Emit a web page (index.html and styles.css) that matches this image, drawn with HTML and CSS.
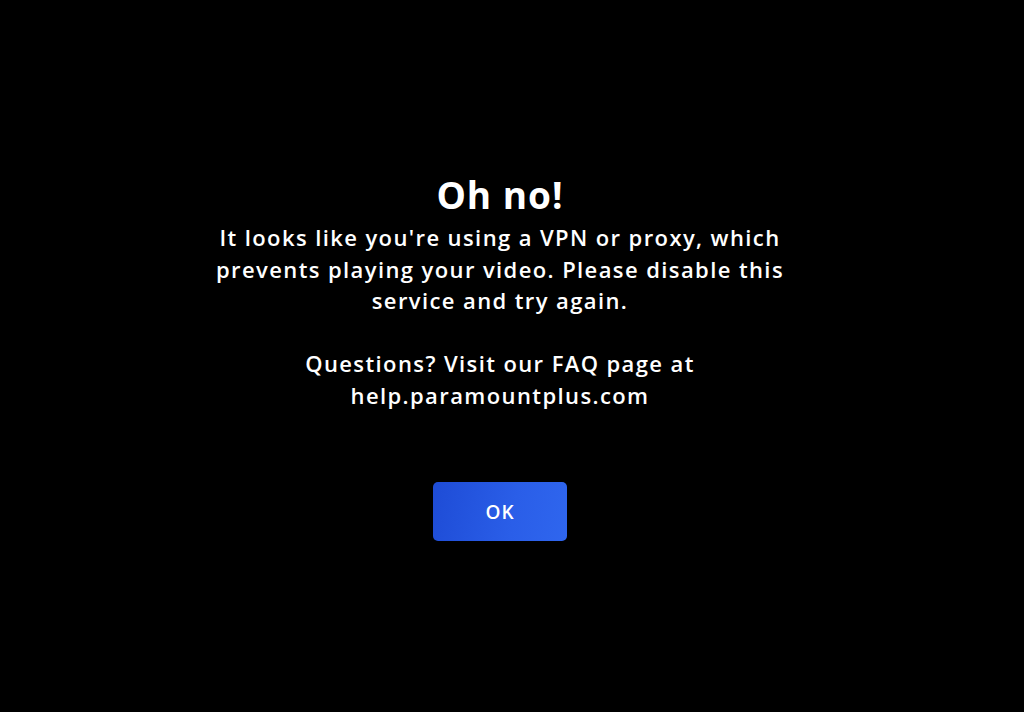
FILE: index.html
```html
<!DOCTYPE html>
<html>
<head>
<meta charset="utf-8">
<link rel="stylesheet" href="styles.css">
</head>
<body>
<main class="dialog">
  <h1 class="title">Oh no!</h1>
  <p class="message">It looks like you're using a VPN or proxy, which<br>prevents playing your video. Please disable this<br>service and try again.</p>
  <p class="message help">Questions? Visit our FAQ page at<br>help.paramountplus.com</p>
  <button class="ok">OK</button>
</main>
</body>
</html>
```
FILE: styles.css
```css
html, body {
  margin: 0;
  padding: 0;
  background: #000;
  height: 100%;
}
body {
  font-family: "Open Sans", "Liberation Sans", sans-serif;
  color: #fff;
}
.dialog {
  display: flex;
  flex-direction: column;
  align-items: center;
  padding-top: 172px;
  padding-right: 24px;
  text-align: center;
}
.title {
  margin: 0;
  font-size: 37px;
  font-weight: 700;
  line-height: 46px;
  letter-spacing: 1px;
}
.message {
  margin: 4px 0 0;
  font-size: 22px;
  font-weight: 600;
  line-height: 31.5px;
  letter-spacing: 1.4px;
}
.help {
  margin-top: 31.5px;
}
.ok {
  margin-top: 71px;
  width: 134px;
  height: 59px;
  border: none;
  border-radius: 5px;
  background: linear-gradient(100deg, #1e4cd6 0%, #2a5ee8 60%, #2f66ee 100%);
  color: #fff;
  font-family: "Open Sans", "Liberation Sans", sans-serif;
  font-size: 19px;
  font-weight: 600;
  letter-spacing: 1px;
}
```
